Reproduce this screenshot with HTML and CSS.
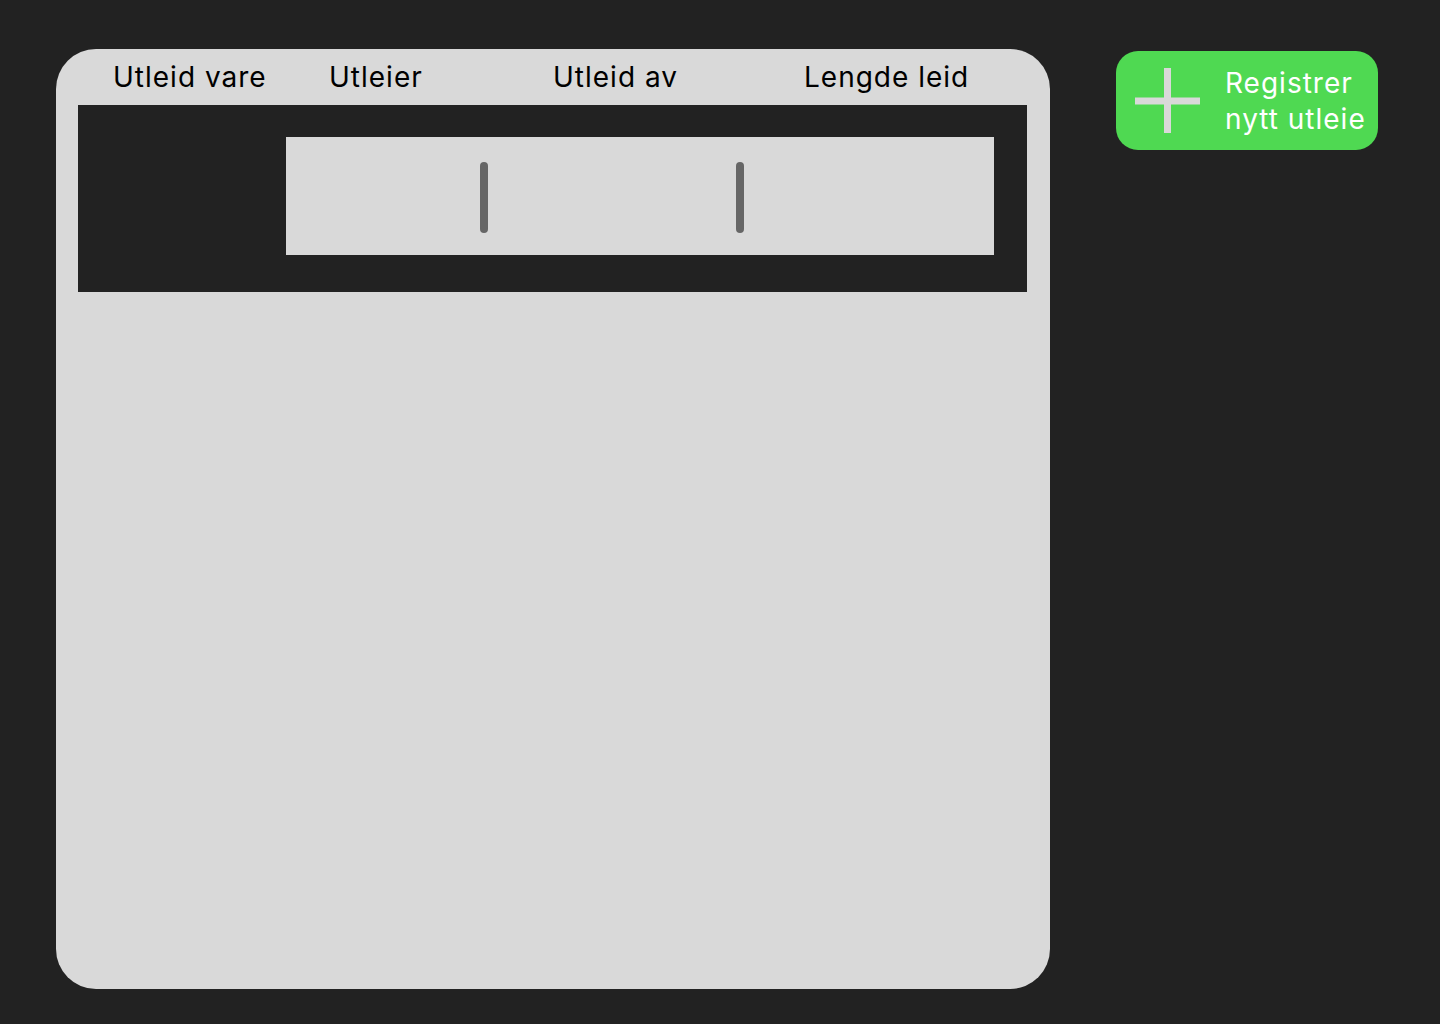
FILE: index.html
```html
<!DOCTYPE html>
<html lang="no">
<head>
<meta charset="utf-8">
<title>Utleie</title>
<link rel="stylesheet" href="styles.css">
</head>
<body>
<main class="page">
  <section class="panel">
    <div class="head">
      <span>Utleid vare</span>
      <span>Utleier</span>
      <span>Utleid av</span>
      <span>Lengde leid</span>
    </div>
    <div class="row">
      <div class="cell">
        <span class="divider"></span>
        <span class="divider second"></span>
      </div>
    </div>
  </section>
  <button class="add-btn" type="button">
    <svg class="plus" width="65" height="65" viewBox="0 0 65 65" aria-hidden="true">
      <rect x="29" y="0" width="7" height="65" fill="#d9d9d9"/>
      <rect x="0" y="29.5" width="65" height="7" fill="#d9d9d9"/>
    </svg>
    <span class="btn-text">Registrer<br>nytt utleie</span>
  </button>
</main>
</body>
</html>
```
FILE: styles.css
```css
html, body {
  margin: 0;
  padding: 0;
  background: #222222;
}
body {
  font-family: "Inter", "Liberation Sans", sans-serif;
  color: #000;
}
.page {
  display: flex;
  align-items: flex-start;
  padding: 49px 0 0 56px;
  gap: 66px;
}
.panel {
  width: 994px;
  height: 940px;
  background: #d9d9d9;
  border-radius: 40px;
  box-sizing: border-box;
  padding-left: 22px;
}
.head {
  display: grid;
  grid-template-columns: 216px 224px 251px auto;
  padding: 11px 0 11px 35px;
  font-size: 28px;
  line-height: 34px;
  letter-spacing: 1px;
  color: #000;
}
.row {
  width: 949px;
  height: 187px;
  background: #222222;
  box-sizing: border-box;
  padding: 32px 0 0 208px;
}
.cell {
  width: 708px;
  height: 118px;
  background: #d9d9d9;
  box-sizing: border-box;
  padding: 25px 0 0 194px;
  display: flex;
  gap: 248px;
}
.divider {
  display: block;
  width: 8px;
  height: 71px;
  border-radius: 4px;
  background: #666666;
}
.add-btn {
  margin-top: 2px;
  width: 262px;
  height: 99px;
  border: none;
  border-radius: 22px;
  background: #4fd952;
  display: flex;
  align-items: center;
  padding: 0 0 0 19px;
  gap: 25px;
  font-family: "Inter", "Liberation Sans", sans-serif;
  cursor: pointer;
}
.plus {
  flex: none;
  display: block;
}
.btn-text {
  font-size: 28px;
  line-height: 36px;
  letter-spacing: 1px;
  color: #ffffff;
  text-align: left;
  white-space: nowrap;
}
```
